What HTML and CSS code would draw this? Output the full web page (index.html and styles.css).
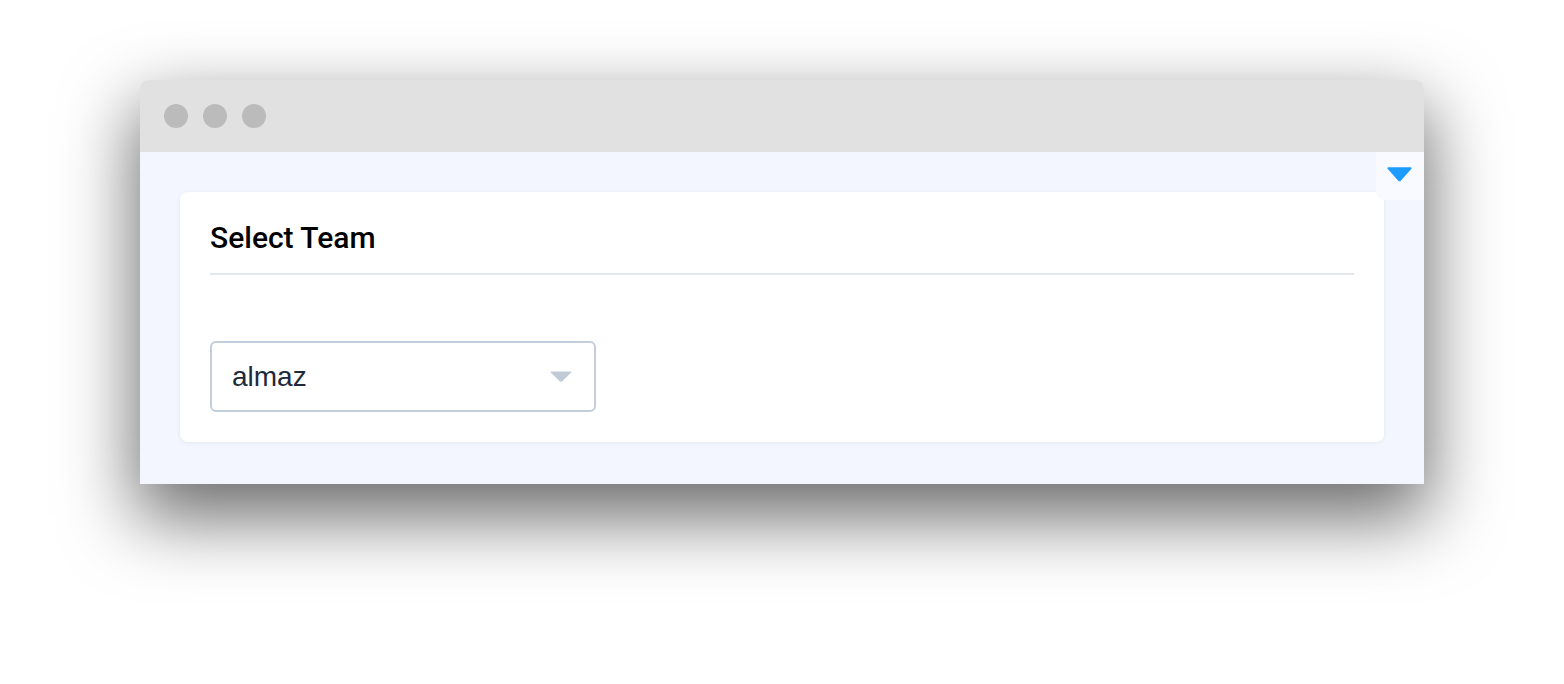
FILE: index.html
```html
<!DOCTYPE html>
<html>
<head>
<meta charset="utf-8">
<link rel="stylesheet" href="styles.css">
</head>
<body>
<div class="window">
  <div class="titlebar">
    <span class="dot"></span><span class="dot"></span><span class="dot"></span>
  </div>
  <div class="content">
    <div class="corner-toggle">
      <svg width="27" height="15" viewBox="0 0 26 14"><path d="M1.5 1.5 Q0.5 0 2.5 0 H23.5 Q25.5 0 24.5 1.5 L14.2 13 Q13 14.2 11.8 13 Z" fill="#1e9bff"/></svg>
    </div>
    <div class="card">
      <h2 class="card-title">Select Team</h2>
      <div class="select">
        <span class="select-value">almaz</span>
        <svg class="select-arrow" width="22" height="11" viewBox="0 0 22 11"><path d="M1 0.5 H21 Q22 0.5 21.2 1.4 L12 10.4 Q11 11.3 10 10.4 L0.8 1.4 Q0 0.5 1 0.5 Z" fill="#bfcbd7"/></svg>
      </div>
    </div>
  </div>
</div>
</body>
</html>
```
FILE: styles.css
```css
html, body {
  margin: 0;
  padding: 0;
  background: #ffffff;
}
html {
  height: 100%;
}
body {
  min-height: 684px;
  box-sizing: border-box;
  padding: 80px 0 0 140px;
  font-family: Roboto, "Liberation Sans", sans-serif;
}
.window {
  width: 1284px;
  border-radius: 8px 8px 0 0;
  box-shadow: 0 30px 72px 4px rgba(0, 0, 0, 0.58);
}
.titlebar {
  height: 72px;
  background: #e1e1e1;
  border-radius: 8px 8px 0 0;
  display: flex;
  align-items: center;
  padding-left: 24px;
  gap: 15px;
}
.dot {
  width: 24px;
  height: 24px;
  border-radius: 50%;
  background: #bbbbbb;
}
.content {
  position: relative;
  background: #f3f6fe;
  padding: 40px 40px 42px 40px;
}
.corner-toggle {
  position: absolute;
  top: 0;
  right: 0;
  width: 48px;
  height: 48px;
  background: #f8faff;
  border-radius: 0 0 0 8px;
  display: flex;
  align-items: center;
  justify-content: center;
  box-sizing: border-box;
  padding-bottom: 4px;
  padding-right: 2px;
}
.card {
  background: #ffffff;
  border-radius: 8px;
  box-shadow: 0 1px 4px rgba(30, 40, 80, 0.07);
  height: 250px;
  box-sizing: border-box;
  padding: 30px 30px;
}
.card-title {
  margin: 0;
  font-family: Roboto, "Liberation Sans", sans-serif;
  font-weight: 500;
  font-size: 30px;
  line-height: 32px;
  color: #000000;
  padding-bottom: 19px;
  border-bottom: 2px solid #e3e6ea;
}
.select {
  margin-top: 66px;
  width: 386px;
  height: 71px;
  box-sizing: border-box;
  border: 2px solid #c2cedb;
  border-radius: 6px;
  display: flex;
  align-items: center;
  justify-content: space-between;
  padding: 0 22px 0 20px;
}
.select-value {
  font-family: "Liberation Sans", Arial, sans-serif;
  font-size: 28px;
  color: #1e2a3b;
}
.select-arrow {
  display: block;
}
```
